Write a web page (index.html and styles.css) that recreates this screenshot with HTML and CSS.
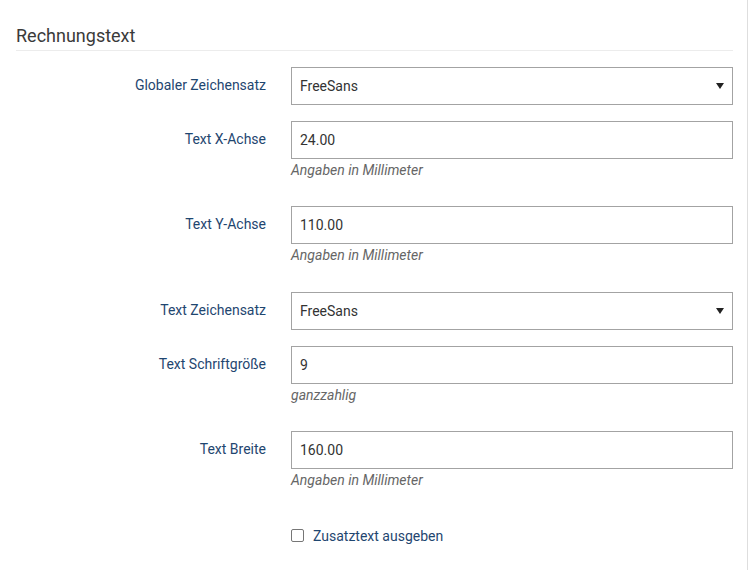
FILE: index.html
```html
<!DOCTYPE html>
<html lang="de">
<head>
<meta charset="utf-8">
<title>Rechnungstext</title>
<link rel="stylesheet" href="styles.css">
</head>
<body>
<div class="page">
  <section class="section">
    <h2 class="section-title">Rechnungstext</h2>

    <div class="form-group">
      <label class="form-label" for="f1">Globaler Zeichensatz</label>
      <div class="field">
        <div class="select-wrap">
          <select id="f1" class="form-control"><option>FreeSans</option></select>
          <svg class="select-arrow" width="8" height="6" viewBox="0 0 8 6"><path d="M0 0H8L4 6Z" fill="#222"/></svg>
        </div>
      </div>
    </div>

    <div class="form-group">
      <label class="form-label" for="f2">Text X-Achse</label>
      <div class="field">
        <input id="f2" class="form-control" type="text" value="24.00">
        <p class="help">Angaben in Millimeter</p>
      </div>
    </div>

    <div class="form-group">
      <label class="form-label" for="f3">Text Y-Achse</label>
      <div class="field">
        <input id="f3" class="form-control" type="text" value="110.00">
        <p class="help">Angaben in Millimeter</p>
      </div>
    </div>

    <div class="form-group">
      <label class="form-label" for="f4">Text Zeichensatz</label>
      <div class="field">
        <div class="select-wrap">
          <select id="f4" class="form-control"><option>FreeSans</option></select>
          <svg class="select-arrow" width="8" height="6" viewBox="0 0 8 6"><path d="M0 0H8L4 6Z" fill="#222"/></svg>
        </div>
      </div>
    </div>

    <div class="form-group">
      <label class="form-label" for="f5">Text Schriftgröße</label>
      <div class="field">
        <input id="f5" class="form-control" type="text" value="9">
        <p class="help">ganzzahlig</p>
      </div>
    </div>

    <div class="form-group">
      <label class="form-label" for="f6">Text Breite</label>
      <div class="field">
        <input id="f6" class="form-control" type="text" value="160.00">
        <p class="help">Angaben in Millimeter</p>
      </div>
    </div>

    <div class="form-group">
      <div class="field field-offset">
        <label class="check">
          <input type="checkbox" class="check-box">
          <span>Zusatztext ausgeben</span>
        </label>
      </div>
    </div>
  </section>
</div>
</body>
</html>
```

FILE: styles.css
```css
html, body {
  margin: 0;
  padding: 0;
  background: #fff;
}

body {
  font-family: Roboto, "Liberation Sans", Arial, sans-serif;
  font-size: 14px;
  line-height: 20px;
  color: #333;
}

.page {
  width: 748px;
  height: 570px;
  box-sizing: border-box;
  border-right: 1px solid #dedede;
}

.section {
  width: 717px;
  padding: 26px 0 0 16px;
}

.section-title {
  margin: 0 0 16px;
  padding-bottom: 4px;
  font-size: 18px;
  font-weight: 400;
  line-height: 20px;
  color: #3a3a3a;
  border-bottom: 1px solid #ececec;
}

.form-group {
  display: grid;
  grid-template-columns: 250px 442px;
  column-gap: 25px;
  margin-bottom: 16px;
}

.form-label {
  text-align: right;
  padding-top: 8px;
  color: #1f4670;
}

.field-offset {
  grid-column: 2;
}

.form-control {
  display: block;
  width: 100%;
  height: 38px;
  box-sizing: border-box;
  margin: 0;
  padding: 0 8px;
  border: 1px solid #a3a3a3;
  border-radius: 0;
  background: #fff;
  font-family: inherit;
  font-size: 14px;
  color: #333;
  outline: none;
}

select.form-control {
  appearance: none;
  -webkit-appearance: none;
  padding-right: 24px;
}

.select-wrap {
  position: relative;
}

.select-arrow {
  position: absolute;
  right: 9px;
  top: 16px;
  pointer-events: none;
}

.help {
  margin: 1px 0 10.4px;
  font-style: italic;
  color: #666;
}

.check {
  display: flex;
  align-items: center;
  gap: 9px;
  padding-top: 9px;
  color: #1f4670;
}

.check-box {
  appearance: none;
  -webkit-appearance: none;
  width: 13px;
  height: 13px;
  margin: 0;
  box-sizing: border-box;
  border: 1px solid #767676;
  border-radius: 2px;
  background: #fff;
}
```
